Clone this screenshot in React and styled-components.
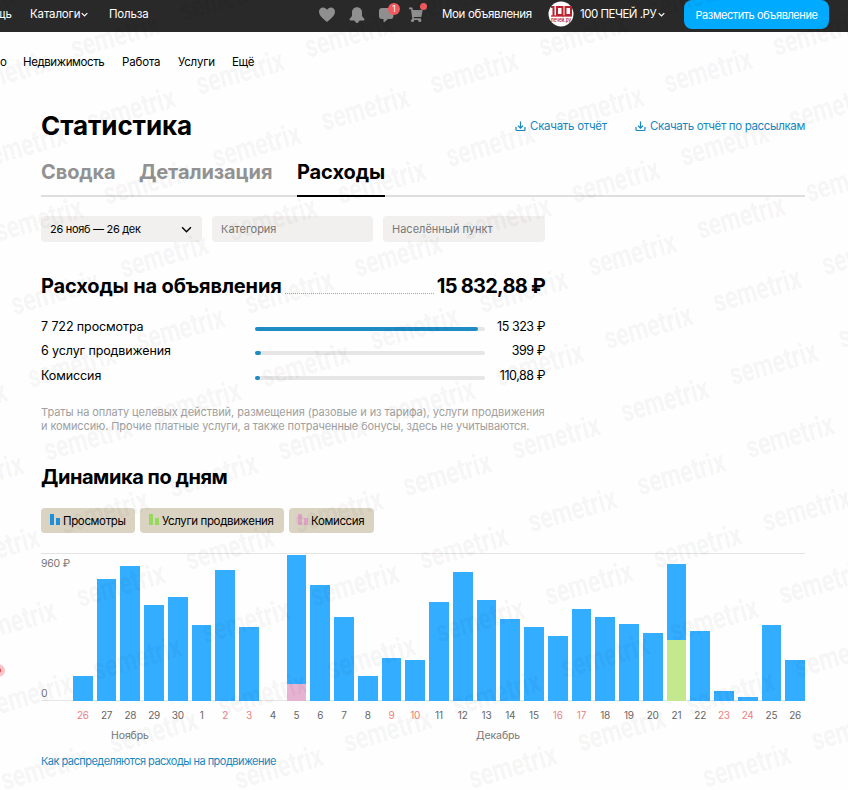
import React from "react";
import styled, { createGlobalStyle } from "styled-components";

const GlobalStyle = createGlobalStyle`
    * {
        box-sizing: border-box;
    }
    body {
        margin: 0;
        background: #fefefe;
        color: #000;
        font-family: Inter, "Noto Sans", sans-serif;
    }
`;

const Page = styled.div`
    position: relative;
    width: 848px;
    height: 790px;
    overflow: hidden;
`;

const TopBar = styled.header`
    display: flex;
    align-items: flex-start;
    width: 848px;
    height: 32px;
    background: #292929;
    color: #fff;
`;

const TopItem = styled.div`
    display: flex;
    align-items: center;
    justify-content: ${props => (props.end ? "flex-end" : "flex-start")};
    flex: none;
    width: ${props => props.width}px;
    height: 28px;
    margin-left: ${props => props.offset || 0}px;
    font-size: 11.5px;
    letter-spacing: ${props => props.spacing || 0}px;
    white-space: nowrap;

    svg {
        flex: none;
        margin-left: ${props => props.iconGap || 0}px;
    }
`;

const IconRow = styled.div`
    display: flex;
    flex: none;
    gap: 10px;
    width: 125px;
    height: 28px;
    padding-top: 5px;
`;

const IconSlot = styled.div`
    position: relative;
    width: 20px;
    height: 20px;

    > svg {
        display: block;
    }
`;

const Badge = styled.span`
    position: absolute;
    top: -2px;
    left: 11px;
    width: 12px;
    height: 12px;
    border-radius: 50%;
    background: #f0595e;
    color: #fff;
    font-size: 8.5px;
    line-height: 12px;
    text-align: center;
`;

const Dot = styled.span`
    position: absolute;
    top: -2px;
    left: 13px;
    width: 7px;
    height: 7px;
    border-radius: 50%;
    background: #f0595e;
`;

const PostButton = styled.button`
    flex: none;
    width: 145px;
    height: 29px;
    padding: 0;
    border: 0;
    border-radius: 8px;
    background: #00aaff;
    color: #fff;
    font: 11px Inter, "Noto Sans", sans-serif;
    letter-spacing: -0.42px;
    white-space: nowrap;
`;

const SubNav = styled.nav`
    display: flex;
    height: 60px;
    line-height: 61px;
`;

const SubNavItem = styled.div`
    flex: none;
    width: ${props => props.width}px;
    font-size: 11.5px;
    letter-spacing: ${props => props.spacing || 0}px;
    white-space: nowrap;
`;

const Content = styled.main`
    width: 765px;
    margin-left: 41px;
`;

const TitleRow = styled.div`
    display: flex;
    align-items: center;
    height: 68px;
`;

const Title = styled.h1`
    flex: 1;
    margin: -2px 0 0;
    font-size: 26px;
    font-weight: 700;
    letter-spacing: -0.1px;
`;

const DownloadLink = styled.a`
    display: flex;
    align-items: center;
    flex: none;
    gap: 4px;
    width: ${props => props.width}px;
    color: #1787c0;
    font-size: 11.5px;
    letter-spacing: ${props => props.spacing}px;
    white-space: nowrap;

    svg {
        flex: none;
    }
`;

const Tabs = styled.div`
    display: flex;
    gap: 24px;
    width: 764px;
    height: 37px;
    border-bottom: 2px solid #dedede;
`;

const Tab = styled.div`
    flex: none;
    width: ${props => props.width}px;
    height: 37px;
    border-bottom: 2px solid ${props => (props.active ? "#000" : "transparent")};
    color: ${props => (props.active ? "#000" : "#929292")};
    font-size: 20px;
    font-weight: 700;
    line-height: 24px;
    letter-spacing: -0.1px;
    white-space: nowrap;
`;

const Filters = styled.div`
    display: grid;
    grid-template-columns: 161px 161px 162px;
    gap: 10px;
    width: 504px;
    margin-top: 19px;
`;

const Filter = styled.div`
    display: flex;
    align-items: center;
    justify-content: space-between;
    height: 26px;
    padding: 0 10px 0 9px;
    border-radius: 4px;
    background: #f2f0ef;
    color: ${props => (props.filled ? "#000" : "#777")};
    font-size: 11px;
    letter-spacing: ${props => (props.filled ? -0.3 : 0)}px;
    white-space: nowrap;
`;

const Total = styled.div`
    display: flex;
    align-items: center;
    width: 504px;
    height: 26px;
    margin-top: 31px;
    font-size: 20px;
    font-weight: 700;
    white-space: nowrap;
`;

const TotalName = styled.h2`
    flex: none;
    width: 244px;
    margin: 0;
    font-size: 20px;
    letter-spacing: -0.15px;
`;

const Leader = styled.div`
    flex: 1;
    height: 16px;
    margin-right: 2px;
    border-bottom: 1px dotted #a5a5a5;
`;

const TotalSum = styled.div`
    flex: none;
    width: 109px;
    text-align: right;
    letter-spacing: -0.75px;
`;

const Costs = styled.div`
    width: 504px;
    margin-top: 15px;
`;

const Cost = styled.div`
    display: grid;
    grid-template-columns: 214px 230px 60px;
    align-items: center;
    height: 24.5px;
    font-size: 12.5px;
    letter-spacing: -0.1px;
    white-space: nowrap;
`;

const CostSum = styled.div`
    text-align: right;
    letter-spacing: -0.45px;
`;

const Track = styled.div`
    height: 4px;
    margin-top: 5px;
    border-radius: 2px;
    background: #e6e6e6;
`;

const Fill = styled.div`
    height: 4px;
    border-radius: 2px;
    background: #1e8bc3;
`;

const Note = styled.p`
    margin: 17px 0 0;
`;

const NoteLine = styled.span`
    display: block;
    color: #a0a0a0;
    font-size: 11px;
    line-height: 14px;
    letter-spacing: ${props => props.spacing}px;
    white-space: nowrap;
`;

const ChartTitle = styled.h2`
    height: 26px;
    margin: 31px 0 0;
    font-size: 20px;
    font-weight: 700;
    line-height: 26px;
    letter-spacing: -0.44px;
`;

const Legend = styled.div`
    display: flex;
    gap: 5px;
    margin-top: 18px;
`;

const Chip = styled.div`
    display: flex;
    align-items: center;
    width: ${props => props.width}px;
    height: 25px;
    padding: 1px 0 0 9px;
    border-radius: 4px;
    background: #dad3c2;
    font-size: 11.5px;
    letter-spacing: -0.36px;
    white-space: nowrap;

    svg {
        flex: none;
        margin-right: 3px;
    }
`;

const Chart = styled.div`
    display: grid;
    grid-template-columns: 32px 732px;
    width: 764px;
    height: 148px;
    margin-top: 20px;
    border-top: 1px solid #e3e3e3;
    box-shadow: inset 0 -1px #e6e6e6;
`;

const Scale = styled.div`
    display: flex;
    flex-direction: column;
    justify-content: space-between;
    padding: 3px 0 0;
    color: #777;
    font-size: 10.5px;
    line-height: 14px;
    letter-spacing: -0.2px;
    white-space: nowrap;
`;

const Days = styled.div`
    display: grid;
    grid-template-columns: repeat(31, 1fr);
    column-gap: 4px;
    align-items: end;
`;

const Day = styled.div`
    display: flex;
    flex-direction: column;
`;

const Segment = styled.div`
    background: ${props => props.color};
`;

const DayLabels = styled(Days)`
    align-items: center;
    width: 732px;
    height: 28px;
    margin-left: 32px;
`;

const DayLabel = styled.div`
    color: ${props => (props.weekend ? "#ee8080" : "#666")};
    font-size: 10px;
    letter-spacing: -0.2px;
    text-align: center;
`;

const Months = styled.div`
    display: flex;
    height: 14px;
    padding-left: 70px;
    color: #777;
    font-size: 10.5px;
    line-height: 14px;
`;

const Month = styled.div`
    flex: none;
    width: 365px;
    letter-spacing: -0.1px;
`;

const HelpLink = styled.a`
    display: block;
    margin-top: 10px;
    color: #1787c0;
    font-size: 11px;
    line-height: 17px;
    letter-spacing: -0.52px;
`;

const Pulse = styled.div`
    position: absolute;
    top: 664px;
    left: -8px;
    width: 13px;
    height: 13px;
    border: 4px solid #fbc4c8;
    border-radius: 50%;
    background: #e0444c;
`;

const Overlay = styled.svg`
    position: absolute;
    top: 0;
    left: 0;
    pointer-events: none;
`;

const BLUE = "#33adff";
const GREEN = "#c3e88d";
const PINK = "#e6b3d3";

// label, views, weekend, other spending, its color
const days = [
    ["26", 25, true],
    ["27", 122],
    ["28", 135],
    ["29", 96],
    ["30", 104],
    ["1", 76],
    ["2", 131, true],
    ["3", 74, true],
    ["4", 0],
    ["5", 129, false, 17, PINK],
    ["6", 116],
    ["7", 84],
    ["8", 25],
    ["9", 43, true],
    ["10", 41, true],
    ["11", 99],
    ["12", 129],
    ["13", 101],
    ["14", 82],
    ["15", 74],
    ["16", 65, true],
    ["17", 92, true],
    ["18", 84],
    ["19", 77],
    ["20", 68],
    ["21", 76, false, 61, GREEN],
    ["22", 70],
    ["23", 10, true],
    ["24", 4, true],
    ["25", 76],
    ["26", 41]
];

const costs = [
    { name: "7 722 просмотра", sum: "15 323 ₽", fill: 223 },
    { name: "6 услуг продвижения", sum: "399 ₽", fill: 6 },
    { name: "Комиссия", sum: "110,88 ₽", fill: 5 }
];

const Chevron = ({ size = 7, width = 1.2 }) => (
    <svg width={size} height={size} viewBox="0 0 10 10">
        <path
            d="M1 3l4 4 4-4"
            fill="none"
            stroke="currentColor"
            strokeWidth={(width * 10) / size}
        />
    </svg>
);

const DownloadIcon = () => (
    <svg width="11" height="11" viewBox="0 0 11 11" fill="none" stroke="currentColor" strokeWidth="1.2">
        <path d="M5.5 0.5v6.5M3 4.8l2.5 2.4L8 4.8M1 6v2.5q0 1 1 1h7q1 0 1-1V6" />
    </svg>
);

const BarsIcon = ({ color }) => (
    <svg width="10" height="14" viewBox="0 0 10 14" fill={color}>
        <rect x="0" y="0" width="4" height="11" />
        <rect x="6" y="4" width="4" height="7" />
    </svg>
);

const HeartIcon = () => (
    <svg width="20" height="20" viewBox="0 0 20 20" fill="#8f8f8f">
        <path d="M10 17C6 13.6 2 10.5 2 6.8C2 4.2 3.8 2.4 6.1 2.4C7.8 2.4 9.2 3.3 10 4.8C10.8 3.3 12.2 2.4 13.9 2.4C16.2 2.4 18 4.2 18 6.8C18 10.5 14 13.6 10 17Z" />
    </svg>
);

const BellIcon = () => (
    <svg width="20" height="20" viewBox="0 0 20 20" fill="#8f8f8f">
        <path d="M10 2.2c3 0 5 2.2 5 5.2v3.7l2.2 2.6c.6.9.3 1.7-.8 1.7H3.6c-1.1 0-1.4-.8-.8-1.7L5 11.1V7.4c0-3 2-5.2 5-5.2z" />
        <path d="M7.5 15h5c-.3 1.8-1.2 2.9-2.5 2.9S7.8 16.8 7.5 15z" />
    </svg>
);

const ChatIcon = () => (
    <svg width="20" height="20" viewBox="0 0 20 20" fill="#8f8f8f">
        <path d="M5 3h8q3.5 0 3.5 3v4.5q0 3.5-3 3.5h-2.5L7.5 17q-1 .6-1-.6V14H5q-3 0-3-3V6q0-3 3-3z" />
    </svg>
);

const CartIcon = () => (
    <svg width="20" height="20" viewBox="0 0 20 20" fill="#8f8f8f">
        <path d="M2 2.5h3.3l.6 2.5h9.8l-1.4 7H6.7l.3 1.3h7v1.7H5.5L4 4.2H2z" />
        <circle cx="5.5" cy="15.5" r="1.6" />
        <circle cx="12.8" cy="15.5" r="1.6" />
    </svg>
);

const Logo = () => (
    <svg width="26" height="26" viewBox="0 0 26 26">
        <circle cx="13" cy="13" r="12.5" fill="#fff" />
        <g fill="none" stroke="#b9232f" strokeWidth="2">
            <path d="M3 6h2.5v9" />
            <rect x="9" y="6" width="5.5" height="8" />
            <rect x="17.5" y="6" width="5.5" height="8" />
        </g>
        <path d="M3 15h21" stroke="#b9232f" strokeWidth="1.3" />
        <text
            x="3"
            y="20.5"
            fill="#b9232f"
            fontFamily="Inter, sans-serif"
            fontSize="5.5"
            fontWeight="600"
            textLength="20"
            lengthAdjust="spacingAndGlyphs"
        >
            печей.ру
        </text>
    </svg>
);

const Watermark = () => {
    const marks = [];
    for (let a = -8; a <= 6; a++) {
        for (let b = -6; b <= 12; b++) {
            const x = 575 + a * 108.8 + b * 16.4;
            const y = 203 - a * 37 + b * 73.1;
            if (x > -85 && x < 846 && y > 10 && y < 812) {
                marks.push(
                    <text
                        key={`${a}:${b}`}
                        transform={`translate(${x} ${y}) rotate(-16)`}
                        textLength="90"
                        lengthAdjust="spacingAndGlyphs"
                    >
                        semetrix
                    </text>
                );
            }
        }
    }
    return (
        <Overlay width="848" height="790">
            <g
                fill="#000"
                fillOpacity="0.055"
                fontFamily="Roboto, sans-serif"
                fontSize="31"
                fontWeight="700"
            >
                {marks}
            </g>
        </Overlay>
    );
};

const App = () => (
    <Page>
        <GlobalStyle />
        <TopBar>
            <TopItem width={12} end>
                щь
            </TopItem>
            <TopItem width={79} offset={18} iconGap={1} spacing={-0.15}>
                Каталоги
                <Chevron />
            </TopItem>
            <TopItem width={208} spacing={-0.2}>
                Польза
            </TopItem>
            <IconRow>
                <IconSlot>
                    <HeartIcon />
                </IconSlot>
                <IconSlot>
                    <BellIcon />
                </IconSlot>
                <IconSlot>
                    <ChatIcon />
                    <Badge>1</Badge>
                </IconSlot>
                <IconSlot>
                    <CartIcon />
                    <Dot />
                </IconSlot>
            </IconRow>
            <TopItem width={106} spacing={-0.35}>
                Мои объявления
            </TopItem>
            <TopItem width={32}>
                <Logo />
            </TopItem>
            <TopItem width={104} iconGap={2} spacing={-0.5}>
                100 ПЕЧЕЙ .РУ
                <Chevron />
            </TopItem>
            <PostButton>Разместить объявление</PostButton>
        </TopBar>
        <SubNav>
            <SubNavItem width={23}>о</SubNavItem>
            <SubNavItem width={99} spacing={-0.4}>
                Недвижимость
            </SubNavItem>
            <SubNavItem width={56} spacing={-0.15}>
                Работа
            </SubNavItem>
            <SubNavItem width={54} spacing={-0.15}>
                Услуги
            </SubNavItem>
            <SubNavItem width={40} spacing={-0.3}>
                Ещё
            </SubNavItem>
        </SubNav>
        <Content>
            <TitleRow>
                <Title>Статистика</Title>
                <DownloadLink width={120} spacing={-0.27}>
                    <DownloadIcon />
                    Скачать отчёт
                </DownloadLink>
                <DownloadLink width={171} spacing={-0.34}>
                    <DownloadIcon />
                    Скачать отчёт по рассылкам
                </DownloadLink>
            </TitleRow>
            <Tabs>
                <Tab width={74}>Сводка</Tab>
                <Tab width={134}>Детализация</Tab>
                <Tab width={88} active>
                    Расходы
                </Tab>
            </Tabs>
            <Filters>
                <Filter filled>
                    26 нояб — 26 дек
                    <Chevron size={11} width={1.4} />
                </Filter>
                <Filter>Категория</Filter>
                <Filter>Населённый пункт</Filter>
            </Filters>
            <Total>
                <TotalName>Расходы на объявления</TotalName>
                <Leader />
                <TotalSum>15 832,88 ₽</TotalSum>
            </Total>
            <Costs>
                {costs.map(cost => (
                    <Cost key={cost.name}>
                        <div>{cost.name}</div>
                        <Track>
                            <Fill style={{ width: cost.fill }} />
                        </Track>
                        <CostSum>{cost.sum}</CostSum>
                    </Cost>
                ))}
            </Costs>
            <Note>
                <NoteLine spacing={-0.05}>
                    Траты на оплату целевых действий, размещения (разовые и из тарифа), услуги продвижения
                </NoteLine>
                <NoteLine spacing={-0.1}>
                    и комиссию. Прочие платные услуги, а также потраченные бонусы, здесь не учитываются.
                </NoteLine>
            </Note>
            <ChartTitle>Динамика по дням</ChartTitle>
            <Legend>
                <Chip width={94}>
                    <BarsIcon color="#1e8fd8" />
                    Просмотры
                </Chip>
                <Chip width={144}>
                    <BarsIcon color="#97d95b" />
                    Услуги продвижения
                </Chip>
                <Chip width={85}>
                    <BarsIcon color="#e0a3c8" />
                    Комиссия
                </Chip>
            </Legend>
            <Chart>
                <Scale>
                    <div>960 ₽</div>
                    <div>0</div>
                </Scale>
                <Days>
                    {days.map(([, value, , extra, color], i) => (
                        <Day key={i}>
                            <Segment color={BLUE} style={{ height: value }} />
                            {extra && <Segment color={color} style={{ height: extra }} />}
                        </Day>
                    ))}
                </Days>
            </Chart>
            <DayLabels>
                {days.map(([day, , weekend], i) => (
                    <DayLabel key={i} weekend={weekend}>
                        {day}
                    </DayLabel>
                ))}
            </DayLabels>
            <Months>
                <Month>Ноябрь</Month>
                <Month>Декабрь</Month>
            </Months>
            <HelpLink>Как распределяются расходы на продвижение</HelpLink>
        </Content>
        <Pulse />
        <Watermark />
    </Page>
);

export default App;
